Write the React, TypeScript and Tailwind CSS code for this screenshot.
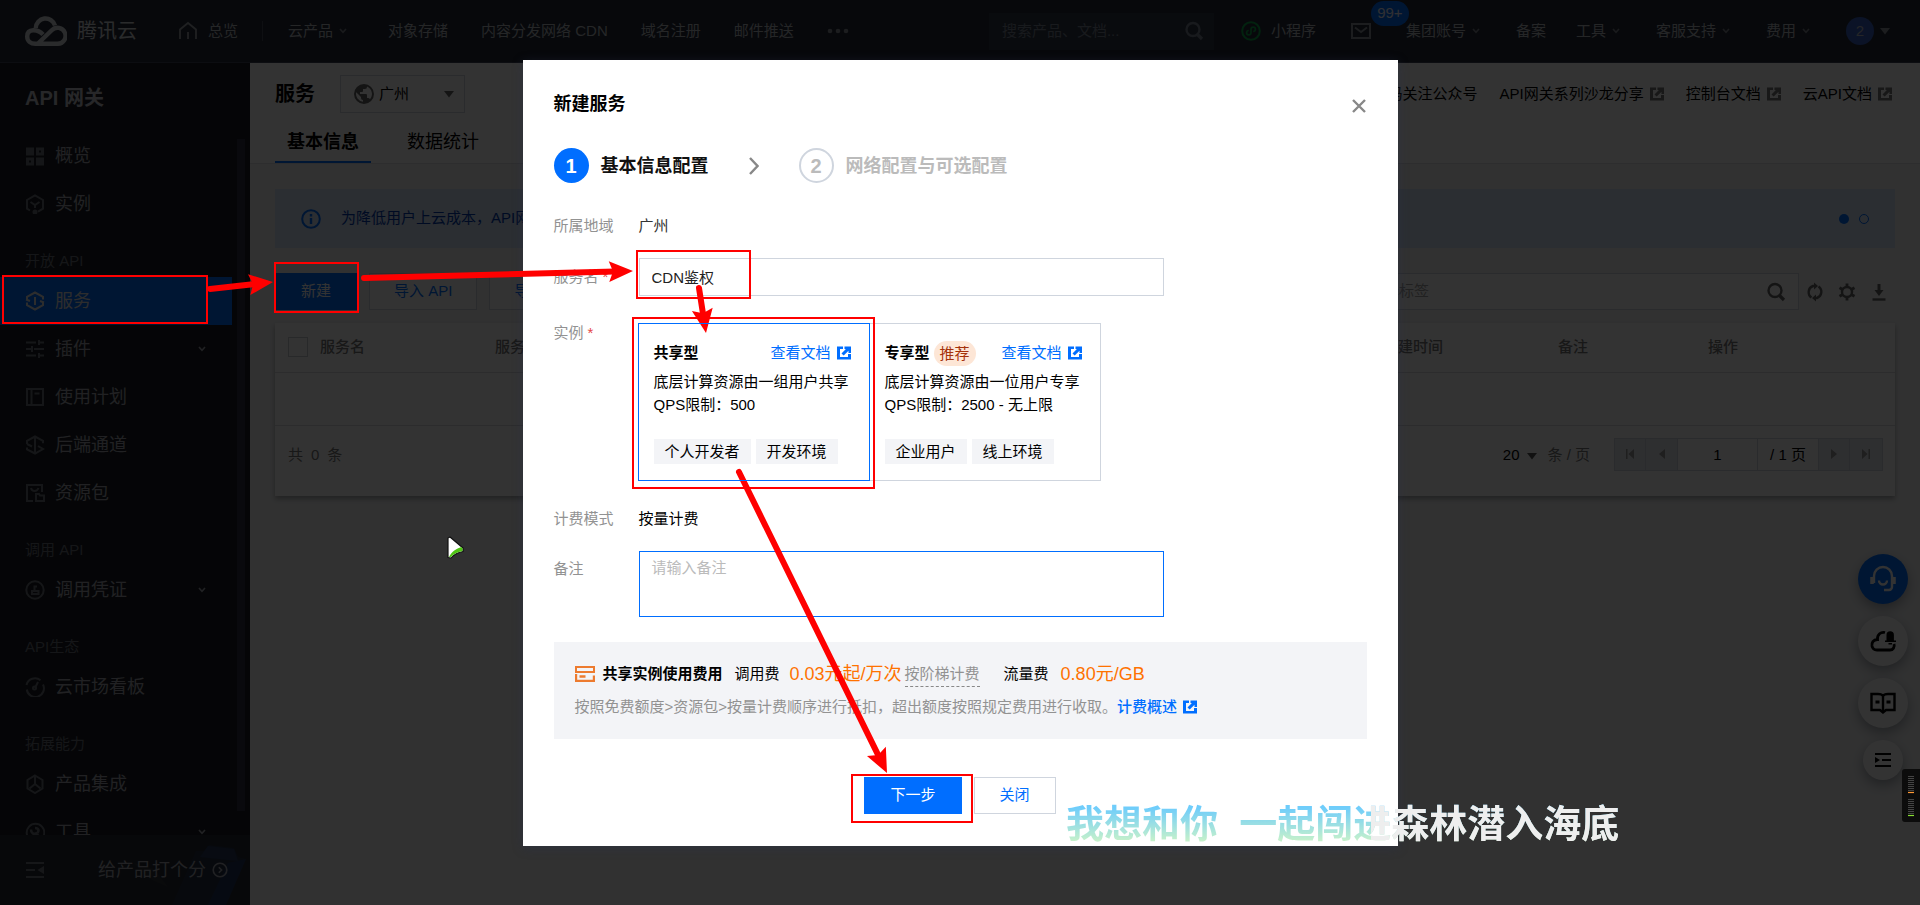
import React from "react";

type Children = { children?: React.ReactNode; className?: string };

const Icon = ({ children, className = "size-5" }: Children) => (
  <svg viewBox="0 0 20 20" className={`shrink-0 ${className}`} fill="none" stroke="currentColor" strokeWidth="2" aria-hidden="true">
    {children}
  </svg>
);

const Chevron = ({ className = "" }: { className?: string }) => (
  <svg viewBox="0 0 10 10" className={`size-[10px] shrink-0 ${className}`} fill="none" stroke="currentColor" strokeWidth="1.6" aria-hidden="true">
    <path d="M2 3l3 3.4L8 3" />
  </svg>
);

const Caret = ({ className = "" }: { className?: string }) => (
  <svg viewBox="0 0 10 10" className={`size-[10px] shrink-0 ${className}`} fill="currentColor" aria-hidden="true">
    <path d="M0 2h10L5 8.5z" />
  </svg>
);

const External = ({ className = "" }: { className?: string }) => (
  <svg viewBox="0 0 14 14" className={`size-[14px] shrink-0 ${className}`} fill="currentColor" aria-hidden="true">
    <path d="M0 0.500h6v2.500H3v8h8V8h3v5.500H0z" />
    <path d="M7.500 0.500H14V7h-2.500V4.800L6.700 9.600 4.500 7.400 8.900 3H7.500z" />
  </svg>
);

const Search = ({ className = "" }: { className?: string }) => (
  <Icon className={className}>
    <circle cx="9" cy="8.500" r="6.500" strokeWidth="2.400" />
    <path d="M13.500 13.500l4.500 4.500" strokeWidth="3.200" />
  </Icon>
);

const NavLink = ({ children, arrow }: { children: React.ReactNode; arrow?: boolean }) => (
  <a href="#" className="flex items-center gap-[5px] whitespace-nowrap">
    {children}
    {arrow && <Chevron className="opacity-60" />}
  </a>
);

function TopBar() {
  return (
    <header className="flex h-[63px] shrink-0 items-center border-b border-[#3c4456] bg-[#242b38] pr-[30px] pl-[25px] text-[15px] text-[#b9bcc3]">
      <a href="#" className="flex items-center gap-[10px] text-[#d2d4da]">
        <svg viewBox="0 0 42 30" className="h-[30px] w-[42px]" fill="none" stroke="currentColor" strokeWidth="4.400" aria-hidden="true">
          <path d="M30 9.500A9.800 9.800 0 0 0 10.800 12" />
          <path d="M18 18.500C13 13 2.200 12 2.200 20.500c0 5 4 7.300 8 7.300h22a8 8 0 1 0-5.500-13.500L13 27.500" />
        </svg>
        <span className="text-xl leading-7">腾讯云</span>
      </a>
      <a href="#" className="ml-[41px] flex items-center gap-[10px]">
        <Icon className="size-5 opacity-80">
          <path d="M2 18V8.500L10 2l8 6.500V18" strokeWidth="1.800" />
          <path d="M10 11v7" strokeWidth="1.800" />
        </Icon>
        总览
      </a>
      <span className="mr-[25px] ml-6 h-5 w-px bg-[#474e5c]" />
      <nav className="flex items-center gap-[33px]">
        <NavLink arrow>云产品</NavLink>
        <a href="#" className="ml-[7px]">对象存储</a>
        <a href="#">内容分发网络 CDN</a>
        <a href="#">域名注册</a>
        <a href="#">邮件推送</a>
        <button type="button" aria-label="更多" className="opacity-70">
          <svg viewBox="0 0 22 6" className="h-[6px] w-[22px]" fill="currentColor" aria-hidden="true">
            <circle cx="3" cy="3" r="2.300" />
            <circle cx="11" cy="3" r="2.300" />
            <circle cx="19" cy="3" r="2.300" />
          </svg>
        </button>
      </nav>
      <div className="mr-[27px] ml-auto flex h-[37px] w-[225px] items-center bg-[#2f3948] pr-[10px] pl-[13px]">
        <input aria-label="搜索产品" placeholder="搜索产品、文档..." className="w-0 grow bg-transparent outline-none placeholder:text-[#77808f]" />
        <Search className="size-5 text-[#77808f]" />
      </div>
      <div className="flex items-center gap-[35px]">
        <a href="#" className="flex items-center gap-[10px]">
          <Icon className="size-5 text-[#0ea84a]">
            <circle cx="10" cy="10" r="8.800" />
            <path d="M7.800 9.500a2.200 2.200 0 1 0 2.200 2.300V8.200a2.200 2.200 0 1 1 2.200 2.300" strokeWidth="1.700" />
          </Icon>
          小程序
        </a>
        <a href="#" aria-label="消息" className="relative">
          <Icon className="size-5 opacity-70">
            <path d="M1 3h18v14H1z" />
            <path d="M4 6.500l6 4.500 6-4.500" />
          </Icon>
          <span className="absolute -top-5 left-5 flex h-[25px] w-[38px] items-center justify-center rounded-full bg-[#006eff] text-[15px] text-[#eef]">99+</span>
        </a>
        <NavLink arrow>集团账号</NavLink>
        <div className="flex gap-[30px]">
          <NavLink>备案</NavLink>
          <NavLink arrow>工具</NavLink>
        </div>
        <NavLink arrow>客服支持</NavLink>
        <NavLink arrow>费用</NavLink>
        <button type="button" className="flex items-center gap-[6px]">
          <span className="flex size-7 items-center justify-center rounded-full bg-[#3a60c0]">2</span>
          <Caret className="opacity-70" />
        </button>
      </div>
    </header>
  );
}

const sideIcons = {
  overview: (
    <>
      <path d="M1 1.500h8v8H1zM1 11.500h8v8H1zM11 1.500h8v8h-8zM11 11.500h8v8h-8z" fill="currentColor" stroke="none" />
      <path d="M14 4.500h2v2h-2zM4 14.500h2v2H4z" fill="#191c24" stroke="none" />
    </>
  ),
  instance: (
    <>
      <path d="M5 16.500l-3-1.800V6L10 1.500 18 6v8.700l-5 3" />
      <path d="M5.500 8l4.500 3 4.500-3M10 11v3" />
      <circle cx="10" cy="18" r="1.500" fill="currentColor" />
    </>
  ),
  service: (
    <>
      <path d="M2 8.500V5.800L10 1.500l8 4.300v2.700M2 11.500v2.700l8 4.300 8-4.300v-2.700" />
      <path d="M10 6v8M1 8.500l4 1.500M19 11.500L15 10" />
    </>
  ),
  plugin: (
    <path d="M1 3.500h10M13 3.500h6M14 1v5M1 10h5M9 10h10M7 7v6M1 16.500h10M13 16.500h6M14 14v5" />
  ),
  plan: (
    <>
      <path d="M2 2h16v16H2zM6.500 2v16" />
      <path d="M9.500 6.500h5" />
    </>
  ),
  backend: (
    <path d="M2 9V5.800L10 1.500l8 4.300v2.500M2 9l5 2.500M10 3v15M2 12.500v2L10 18.500l8-4.500-5-3" />
  ),
  packageIcon: (
    <>
      <path d="M8 18H2V2h15v7" />
      <path d="M6 5c1 4 6 4 7.500 0M11 11h3l1 1.500h4V18h-8z" />
    </>
  ),
  credential: (
    <>
      <circle cx="10" cy="10" r="8.700" />
      <path d="M7 14h6.500v-3H7zM9.500 11V6.500h2.500" />
    </>
  ),
  market: (
    <>
      <path d="M1.500 8a8.700 8.700 0 0 1 14-4.700M18 7.500a8.600 8.600 0 1 1-16.200 5" />
      <path d="M10 11l3-6" />
      <circle cx="9.500" cy="11" r="1.500" />
    </>
  ),
  integrate: (
    <>
      <path d="M10 1.500L17.500 6v8.500L10 19l-7.500-4.500V6z" />
      <path d="M10 2v8l-5.500 4.500M10 10l5.500 4.500" />
    </>
  ),
  tool: (
    <>
      <path d="M5 17.500a8.800 8.800 0 1 1 11 0" />
      <path d="M6 7.500c0 4 3 5 5 4l5 5M10 6c4 0 4 3 2.500 5" strokeWidth="2.600" />
    </>
  ),
};

type SideItem = { label: string; icon: keyof typeof sideIcons; expand?: boolean; active?: boolean };
const sideGroups: { title?: string; items: SideItem[] }[] = [
  { items: [{ label: "概览", icon: "overview" }, { label: "实例", icon: "instance" }] },
  {
    title: "开放 API",
    items: [
      { label: "服务", icon: "service", active: true },
      { label: "插件", icon: "plugin", expand: true },
      { label: "使用计划", icon: "plan" },
      { label: "后端通道", icon: "backend" },
      { label: "资源包", icon: "packageIcon" },
    ],
  },
  { title: "调用 API", items: [{ label: "调用凭证", icon: "credential", expand: true }] },
  { title: "API生态", items: [{ label: "云市场看板", icon: "market" }] },
  { title: "拓展能力", items: [{ label: "产品集成", icon: "integrate" }, { label: "工具", icon: "tool", expand: true }] },
];

function Sidebar() {
  return (
    <aside className="flex w-[250px] shrink-0 flex-col bg-[#191c24] text-[#a4a7af]">
      <h1 className="pt-5 pb-[19px] pl-[25px] text-xl leading-[30px] font-bold text-[#c0c3ca]">API 网关</h1>
      <div className="flex min-h-0 grow overflow-hidden">
        <nav className="grow">
          {sideGroups.map((group, i) => (
            <section key={i}>
              {group.title && (
                <h2 className="flex h-[49px] items-end pb-[6px] pl-[25px] text-[15px] leading-5 text-[#6b6f79]">{group.title}</h2>
              )}
              {group.items.map((item) => (
                <a
                  key={item.label}
                  href="#"
                  className={`mr-[5px] flex h-12 items-center gap-[10px] pr-[25px] pl-[25px] text-lg ${item.active ? "bg-[#006eff] text-[#e0e0e0]" : ""}`}
                >
                  <Icon className={item.active ? "size-5" : "size-5 opacity-60"}>{sideIcons[item.icon]}</Icon>
                  <span className="grow">{item.label}</span>
                  {item.expand && <Chevron />}
                </a>
              ))}
            </section>
          ))}
        </nav>
        <div className="mt-[7px] mr-[5px] mb-6 w-2 bg-[#2d3140]" />
      </div>
      <div className="relative flex h-[70px] shrink-0 items-center overflow-hidden bg-[#262a35] pr-[22px] pl-[25px]">
        <svg viewBox="0 0 120 60" className="absolute right-0 bottom-0 h-[60px] w-[120px]" aria-hidden="true">
          <path d="M42 60L66 6l8 0 5-6 25 3 4 9 8 2-24 46z" fill="#263044" />
          <path d="M78 60L98 18l18-4-20 46z" fill="#22365c" />
          <path d="M70 12l8-11 26 3 4 12z" fill="#283a5c" />
          <path d="M4 18l20 6 14 18-18-8z" fill="#30333a" />
        </svg>
        <button type="button" aria-label="收起菜单" className="opacity-60">
          <Icon className="size-5">
            <path d="M1 3h18M1 17h18M1 10h9" strokeWidth="2.200" />
            <path d="M12.500 10l6.500-4v8z" fill="currentColor" stroke="none" />
          </Icon>
        </button>
        <a href="#" className="relative ml-auto flex items-center gap-[6px] text-lg">
          给产品打个分
          <Icon className="size-4">
            <circle cx="10" cy="10" r="8.500" />
            <path d="M8.500 6.500L12 10l-3.500 3.500" />
          </Icon>
        </a>
      </div>
    </aside>
  );
}

function MainPage() {
  return (
    <main className="flex min-w-0 grow flex-col bg-[#f3f4f5]">
      <div className="border-b border-[#e0e2e6] bg-white pt-3 pr-7 pl-[25px]">
        <div className="flex items-center">
          <h2 className="text-xl font-bold">服务</h2>
          <button type="button" className="ml-[25px] flex h-[38px] w-[125px] items-center border border-[#cfd5de] pr-[10px] pl-[13px] text-[15px]">
            <svg viewBox="0 0 20 20" className="mr-[5px] size-5 text-[#666]" aria-hidden="true">
              <path fill="currentColor" fillRule="evenodd" d="M10 0a10 10 0 1 0 0 20 10 10 0 0 0 0-20zM9 17.800A7.900 7.900 0 0 1 2.200 8.300L7 13v1a2 2 0 0 0 2 2zm6.900-2.500A2 2 0 0 0 14 14h-1v-3a1 1 0 0 0-1-1H6V8h2a1 1 0 0 0 1-1V5h2a2 2 0 0 0 2-2v-.4a8 8 0 0 1 2.900 12.700z" />
            </svg>
            广州
            <Caret className="ml-auto text-[#666]" />
          </button>
          <div className="ml-auto flex items-center gap-[22px] text-[15px]">
            <a href="#">扫码关注公众号</a>
            {["API网关系列沙龙分享", "控制台文档", "云API文档"].map((t) => (
              <a key={t} href="#" className="flex items-center gap-[6px]">
                {t}
                <External className="text-[#777]" />
              </a>
            ))}
          </div>
        </div>
        <div className="mt-[10px] flex gap-6 text-lg">
          <button type="button" className="h-10 border-b-2 border-[#006eff] px-3 font-bold">基本信息</button>
          <button type="button" className="h-10 border-b-2 border-transparent px-3">数据统计</button>
        </div>
      </div>
      <div className="p-[25px]">
        <div className="flex h-[59px] items-center bg-[#d5e3fa] pr-[26px] pl-[26px] text-[15px] text-[#003bb0]">
          <Icon className="mr-5 size-5 text-[#006eff]">
            <circle cx="10" cy="10" r="8.800" />
            <path d="M10 9v6M10 5v2.500" strokeWidth="2.400" />
          </Icon>
          为降低用户上云成本，API网关
          <span className="ml-auto flex gap-[10px]">
            <i className="size-[10px] rounded-full bg-[#006eff]" />
            <i className="size-[10px] rounded-full border border-[#006eff]" />
          </span>
        </div>
        <div className="mt-[25px] flex items-center gap-3 text-[15px] text-[#006eff]">
          <button type="button" className="h-[37px] bg-[#006eff] px-[26px] text-white">新建</button>
          <button type="button" className="h-[37px] border border-[#cfd5de] bg-white px-6">导入 API</button>
          <button type="button" className="h-[37px] border border-[#cfd5de] bg-white px-6">导出 API</button>
          <div className="ml-auto flex items-center text-[#666]">
            <div className="flex h-[37px] w-[458px] items-center border border-[#cfd5de] bg-white pr-3 pl-3">
              <input aria-label="标签" placeholder="请选择标签" className="w-0 grow outline-none placeholder:text-[#a5a5a5]" />
              <Search className="size-5" />
            </div>
            <button type="button" aria-label="刷新" className="flex w-8 justify-center">
              <Icon>
                <path d="M6.500 15.500A6.500 6.500 0 0 1 8 4h1.500M13.500 4.500A6.500 6.500 0 0 1 12 16h-1.500" strokeWidth="2.400" />
                <path d="M9 0.500v7L13 4zM11 12.500v7L7 16z" fill="currentColor" stroke="none" />
              </Icon>
            </button>
            <button type="button" aria-label="设置" className="flex w-8 justify-center">
              <Icon>
                <circle cx="10" cy="10" r="5" strokeWidth="2.400" />
                <path d="M10 1.500V5M10 15v3.500M2.500 5.700l3.200 1.800M14.300 12.500l3.200 1.800M2.500 14.300l3.200-1.800M14.300 7.500l3.200-1.800" strokeWidth="2.800" />
              </Icon>
            </button>
            <button type="button" aria-label="下载" className="flex w-8 justify-center">
              <Icon>
                <path d="M3.500 17.500h13" strokeWidth="2.400" />
                <path d="M10 2v7" strokeWidth="3" />
                <path d="M5.500 8h9L10 14z" fill="currentColor" stroke="none" />
              </Icon>
            </button>
          </div>
        </div>
        <div className="mt-[13px] bg-white text-[15px] text-[#777] shadow-[0_3px_5px_rgba(0,0,0,0.3)]">
          <table className="w-full table-fixed text-left">
            <thead>
              <tr className="h-[49px] border-b border-[#d9dce1]">
                <th className="w-[45px] pl-[13px]">
                  <input type="checkbox" aria-label="全选" className="block size-5 appearance-none border border-[#c8ccd3]" />
                </th>
                <th className="w-[175px] font-medium">服务名</th>
                <th className="font-medium">服务ID</th>
                <th className="w-[175px] font-medium">创建时间</th>
                <th className="w-[150px] font-medium">备注</th>
                <th className="w-[187px] font-medium">操作</th>
              </tr>
            </thead>
            <tbody>
              <tr className="h-[53px] border-b border-[#d9dce1]">
                <td colSpan={6} />
              </tr>
            </tbody>
          </table>
          <div className="flex h-[70px] items-start pt-3 pr-3 pl-[13px] leading-[33px]">
            <span className="flex gap-2">
              <span>共</span>
              <span>0</span>
              <span>条</span>
            </span>
            <button type="button" className="ml-auto flex items-center gap-2 text-black">
              20
              <Caret className="mt-1 text-[#555]" />
            </button>
            <span className="mr-6 ml-[10px]">条 / 页</span>
            <div className="flex h-[33px] border border-[#cfd5de] text-black">
              <button type="button" aria-label="首页" className="flex w-[31px] items-center justify-center border-r border-[#cfd5de] bg-[#e5e8ef] text-[#999]">
                <svg viewBox="0 0 8 10" className="h-[10px] w-2" fill="currentColor" aria-hidden="true"><path d="M0 0h1.500v10H0zM8 0v10L2.500 5z" /></svg>
              </button>
              <button type="button" aria-label="上一页" className="flex w-8 items-center justify-center border-r border-[#cfd5de] bg-[#e5e8ef] text-[#999]">
                <svg viewBox="0 0 8 10" className="h-[10px] w-2" fill="currentColor" aria-hidden="true"><path d="M7 0v10L1 5z" /></svg>
              </button>
              <input aria-label="页码" defaultValue="1" className="w-20 border-r border-[#cfd5de] text-center" />
              <span className="flex w-[61px] items-center justify-center border-r border-[#cfd5de]">/ 1 页</span>
              <button type="button" aria-label="下一页" className="flex w-[31px] items-center justify-center border-r border-[#cfd5de] bg-[#e5e8ef] text-[#999]">
                <svg viewBox="0 0 8 10" className="h-[10px] w-2" fill="currentColor" aria-hidden="true"><path d="M1 0v10l6-5z" /></svg>
              </button>
              <button type="button" aria-label="末页" className="flex w-8 items-center justify-center bg-[#e5e8ef] text-[#999]">
                <svg viewBox="0 0 8 10" className="h-[10px] w-2" fill="currentColor" aria-hidden="true"><path d="M8 0H6.500v10H8zM0 0v10l5.500-5z" /></svg>
              </button>
            </div>
          </div>
        </div>
      </div>
    </main>
  );
}

function FloatingTools() {
  const round = "flex items-center justify-center rounded-full shadow-[0_5px_12px_rgba(20,30,50,0.35)]";
  return (
    <div className="absolute right-3 bottom-[125px] flex flex-col items-center gap-3 text-black">
      <button type="button" aria-label="客服" className={`${round} size-[50px] bg-[#006eff] text-white`}>
        <svg viewBox="0 0 28 28" className="size-7" fill="none" stroke="currentColor" strokeWidth="2.400" aria-hidden="true">
          <path d="M5 18V11a9 9 0 0 1 18 0v11a3 3 0 0 1-3 3h-5" />
          <path d="M3 12v7M25 12v7" strokeWidth="3.500" />
          <path d="M10 15.500a4 4 0 0 0 8 0" />
        </svg>
      </button>
      <button type="button" aria-label="通知" className={`${round} size-[50px] bg-white`}>
        <svg viewBox="0 0 28 28" className="size-7" fill="none" stroke="currentColor" strokeWidth="2.800" aria-hidden="true">
          <path d="M16 5.500c-4-1-8 2-7.500 7C4 12.500 2.500 16 3 19c.5 2.500 2.500 4 5 4h13c3 0 5-3 4-6" />
          <path d="M17.500 13.500V8a3.700 3.700 0 0 1 7.400 0v5.500H27V15H16v-1.500zM19.500 16h3.500v1.500h-3.500z" fill="currentColor" stroke="none" />
        </svg>
      </button>
      <button type="button" aria-label="文档" className={`${round} size-[50px] bg-white`}>
        <svg viewBox="0 0 28 28" className="size-7" fill="none" stroke="currentColor" strokeWidth="2.400" aria-hidden="true">
          <path d="M14 7c-1-2-3-2-5-2H2.500v16H11l3 2.500 3-2.500h8.500V5H19c-2 0-4 0-5 2zM14 7v16" />
          <path d="M6.500 13h4M17.500 13h4" strokeWidth="2.800" />
        </svg>
      </button>
      <button type="button" aria-label="展开" className={`${round} size-10 bg-white`}>
        <Icon>
          <path d="M2 4h16M9 10h9M2 16h16" />
          <path d="M2 7l5 3-5 3z" fill="currentColor" stroke="none" />
        </Icon>
      </button>
    </div>
  );
}

const Label = ({ children, htmlFor, className = "" }: Children & { htmlFor?: string }) => (
  <label htmlFor={htmlFor} className={`w-[85px] shrink-0 text-[#929292] ${className}`}>
    {children}
  </label>
);

const Required = () => <span className="ml-1 text-[#e54545]">*</span>;

const Tag = ({ children }: Children) => <span className="bg-[#f3f4f7] px-[11px] leading-[25px]">{children}</span>;

type Plan = { name: string; badge?: string; desc: string; qps: string; tags: string[]; selected?: boolean };
const plans: Plan[] = [
  { name: "共享型", desc: "底层计算资源由一组用户共享", qps: "QPS限制：500", tags: ["个人开发者", "开发环境"], selected: true },
  { name: "专享型", badge: "推荐", desc: "底层计算资源由一位用户专享", qps: "QPS限制：2500 - 无上限", tags: ["企业用户", "线上环境"] },
];

function PlanCard({ plan }: { plan: Plan }) {
  return (
    <div className={`flex h-[158px] w-[232px] flex-col border pt-4 pr-[18px] pl-[15px] ${plan.selected ? "relative z-10 border-[#006eff]" : "-ml-px border-[#cfd5de]"}`}>
      <div className="flex h-[26px] items-center">
        <span className="font-bold">{plan.name}</span>
        {plan.badge && <span className="ml-1 rounded-full bg-[#fde6d6] px-[6px] leading-[25px] text-[#a5320a]">{plan.badge}</span>}
        <a href="#" className="ml-auto flex items-center gap-[6px] text-[#006eff]">
          查看文档
          <External />
        </a>
      </div>
      <p className="mt-1 leading-[23px] whitespace-nowrap">{plan.desc}</p>
      <p className="leading-[23px]">{plan.qps}</p>
      <div className="mt-[23px] flex gap-[5px]">
        {plan.tags.map((t) => (
          <Tag key={t}>{t}</Tag>
        ))}
      </div>
    </div>
  );
}

function CreateDialog() {
  return (
    <div role="dialog" aria-label="新建服务" className="w-[875px] max-w-full bg-white px-[31px] pt-[31px] pb-8 text-[15px] shadow-[0_2px_10px_rgba(40,50,80,0.4)]">
      <div className="flex items-center justify-between pr-px">
        <h2 className="text-lg leading-[26px] font-bold">新建服务</h2>
        <button type="button" aria-label="关闭窗口" className="mt-1 text-[#888]">
          <svg viewBox="0 0 14 14" className="size-[14px]" fill="none" stroke="currentColor" strokeWidth="2.400" aria-hidden="true">
            <path d="M1 1l12 12M13 1L1 13" />
          </svg>
        </button>
      </div>
      <ol className="mt-[31px] flex items-center text-lg font-bold">
        <li className="flex items-center gap-3 text-[#111]">
          <span className="flex size-[35px] items-center justify-center rounded-full bg-[#006eff] text-xl text-white">1</span>
          基本信息配置
        </li>
        <svg viewBox="0 0 10 18" className="mx-10 h-[18px] w-[10px] text-[#888]" fill="none" stroke="currentColor" strokeWidth="2.400" aria-hidden="true">
          <path d="M1 1l7.500 8L1 17" />
        </svg>
        <li className="flex items-center gap-3 text-[#bbb]">
          <span className="flex size-[35px] items-center justify-center rounded-full border-2 border-[#cfd5de] text-xl">2</span>
          网络配置与可选配置
        </li>
      </ol>
      <form onSubmit={(e) => e.preventDefault()}>
        <div className="mt-[31px] flex leading-6">
          <Label>所属地域</Label>
          <span className="text-[#333]">广州</span>
        </div>
        <div className="mt-5 flex items-center">
          <Label htmlFor="service-name">服务名<Required /></Label>
          <input id="service-name" defaultValue="CDN鉴权" className="h-[38px] w-[525px] border border-[#cfd5de] px-3 pb-[2px] text-[#222] outline-none" />
        </div>
        <div className="mt-[27px] flex">
          <Label className="leading-5">实例<Required /></Label>
          <div className="-ml-px flex text-black">
            {plans.map((p) => (
              <PlanCard key={p.name} plan={p} />
            ))}
          </div>
        </div>
        <div className="mt-[26px] flex leading-6">
          <Label>计费模式</Label>
          <span>按量计费</span>
        </div>
        <div className="mt-5 flex">
          <Label htmlFor="remark" className="pt-[6px] leading-6">备注</Label>
          <textarea id="remark" placeholder="请输入备注" className="h-[66px] w-[525px] resize-none border border-[#006eff] px-3 py-1 leading-6 outline-none placeholder:text-[#bbb]" />
        </div>
        <div className="mt-[25px] h-[97px] bg-[#f3f4f7] px-[21px] pt-[18px]">
          <div className="flex h-7 items-center whitespace-nowrap">
            <svg viewBox="0 0 20 16" className="mr-2 h-4 w-5 text-[#ed7b2f]" fill="none" stroke="currentColor" strokeWidth="2" aria-hidden="true">
              <path d="M0 1h20M1 1v5M0 6h20M19 1v5" />
              <path d="M1 8v7h18V9.500M4.500 10.500h6" strokeWidth="2.400" />
            </svg>
            <span className="font-bold">共享实例使用费用</span>
            <span className="ml-3">调用费</span>
            <span className="ml-[10px] text-lg text-[#ff7200]">0.03元起/万次</span>
            <span className="ml-[3px] border-b border-dashed border-[#888] leading-6 text-[#929292]">按阶梯计费</span>
            <span className="ml-6">流量费</span>
            <span className="ml-3 text-lg text-[#ff7200]">0.80元/GB</span>
          </div>
          <p className="mt-[7px] flex items-center leading-6 whitespace-nowrap text-[#929292]">
            按照免费额度&gt;资源包&gt;按量计费顺序进行抵扣，超出额度按照规定费用进行收取。
            <a href="#" className="flex items-center gap-[6px] font-medium text-[#006eff]">
              计费概述
              <External />
            </a>
          </p>
        </div>
        <div className="mt-[38px] flex justify-center gap-3">
          <button type="submit" className="h-[37px] bg-[#006eff] px-[26px] text-white">下一步</button>
          <button type="button" className="h-[37px] border border-[#cfd5de] px-[25px] text-[#006eff]">关闭</button>
        </div>
      </form>
    </div>
  );
}

const boxes = [
  { x: 3, y: 276, w: 204, h: 47 },
  { x: 275, y: 263, w: 83, h: 49 },
  { x: 637, y: 251, w: 113, h: 47 },
  { x: 633, y: 318, w: 241, h: 170 },
  { x: 852, y: 775, w: 120, h: 47 },
];
const arrows = [
  { x1: 210, y1: 289, x2: 273, y2: 282 },
  { x1: 364, y1: 278, x2: 633, y2: 271 },
  { x1: 699, y1: 288, x2: 706, y2: 333 },
  { x1: 739, y1: 472, x2: 887, y2: 773 },
];

function Annotations() {
  return (
    <svg width="1920" height="905" viewBox="0 0 1920 905" className="pointer-events-none absolute top-0 left-0" aria-hidden="true">
      {boxes.map((b) => (
        <rect key={b.y} x={b.x} y={b.y} width={b.w} height={b.h} fill="none" stroke="#f00" strokeWidth="2" />
      ))}
      {arrows.map((a) => {
        const len = Math.hypot(a.x2 - a.x1, a.y2 - a.y1);
        const angle = (Math.atan2(a.y2 - a.y1, a.x2 - a.x1) * 180) / Math.PI;
        return (
          <g key={a.x1} transform={`translate(${a.x1} ${a.y1}) rotate(${angle})`}>
            <path d={`M0 0H${len - 18}`} stroke="#f00" strokeWidth="6" strokeLinecap="round" />
            <path d={`M${len} 0l-24 -10.500 4 10.500 -4 10.500z`} fill="#f00" />
          </g>
        );
      })}
      <path d="M448 538v19.500l3 .5c3-4 7-5.500 12-6.500v-3.500L450 537z" fill="#fff" stroke="#111" strokeWidth="1.200" strokeLinejoin="round" />
      <path d="M449 557c3-6 7-8 12.500-10l1 1.500v2.500c-5 1-9 3-11.500 6z" fill="#4fc414" />
    </svg>
  );
}

function LevelMeter() {
  return (
    <svg viewBox="0 0 18 53" className="absolute right-0 bottom-[83px] h-[53px] w-[18px]" aria-hidden="true">
      <path d="M3 0h15v53H3a3 3 0 0 1-3-3V3a3 3 0 0 1 3-3z" fill="#0c0c0c" />
      <path d="M9 7v16M9 30v16" stroke="#444" strokeWidth="6" strokeDasharray="1 1" />
      <path d="M6 23.500h6" stroke="#f93" strokeWidth="1.200" />
      <path d="M6 46.500h6" stroke="#8d3" strokeWidth="1.200" />
    </svg>
  );
}

export default function App() {
  return (
    <div className="relative flex h-screen flex-col overflow-hidden font-['Liberation_Sans','Noto_Sans_CJK_SC',sans-serif] text-black">
      <TopBar />
      <div className="flex min-h-0 grow">
        <Sidebar />
        <MainPage />
      </div>
      <FloatingTools />
      <div className="absolute inset-0 flex items-start justify-center bg-black/80 pt-[60px]">
        <CreateDialog />
      </div>
      <Annotations />
      <LevelMeter />
      <p className="absolute top-[797px] left-[1066px] bg-[linear-gradient(90deg,transparent_305px,#eeeeee_305px),linear-gradient(180deg,#6fcdfb_20%,#c4f0cc_80%)] bg-clip-text text-[38px] leading-[54px] font-bold whitespace-pre text-transparent">
        我想和你{"  "}一起闯进森林潜入海底
      </p>
    </div>
  );
}
